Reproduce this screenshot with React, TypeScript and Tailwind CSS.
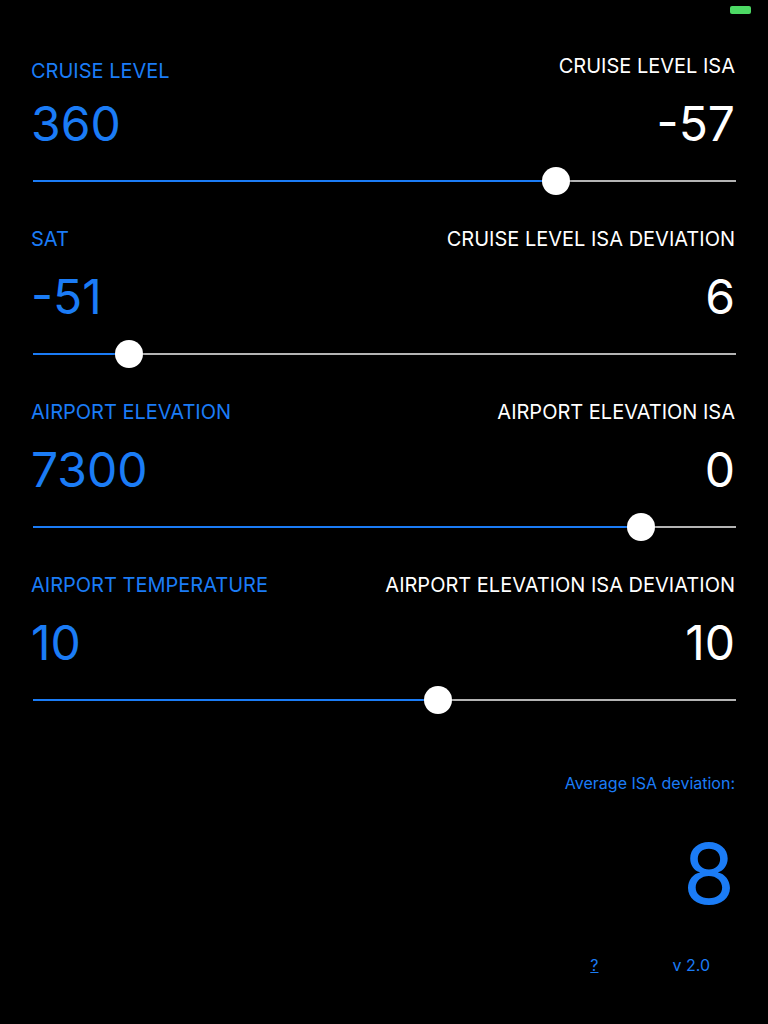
import React from 'react';

type Row = {
  label: string;
  value: string;
  isaLabel: string;
  isaValue: string;
  pos: number;
  shift?: boolean;
};

const rows: Row[] = [
  { label: 'CRUISE LEVEL', value: '360', isaLabel: 'CRUISE LEVEL ISA', isaValue: '-57', pos: 0.744, shift: true },
  { label: 'SAT', value: '-51', isaLabel: 'CRUISE LEVEL ISA DEVIATION', isaValue: '6', pos: 0.1366 },
  { label: 'AIRPORT ELEVATION', value: '7300', isaLabel: 'AIRPORT ELEVATION ISA', isaValue: '0', pos: 0.865 },
  { label: 'AIRPORT TEMPERATURE', value: '10', isaLabel: 'AIRPORT ELEVATION ISA DEVIATION', isaValue: '10', pos: 0.576 },
];

function Slider({ pos }: { pos: number }) {
  const pct = `${pos * 100}%`;
  return (
    <div className="relative h-[28px] ml-[2px] mr-[-1px] flex items-center">
      <div className="flex h-[2px] w-full">
        <div className="h-full bg-[#1b7cf6]" style={{ width: pct }} />
        <div className="h-full flex-1 bg-[#b4b4b4]" />
      </div>
      {/* thumb */}
      <div
        className="absolute top-0 w-[28px] h-[28px] -ml-[14px] rounded-full bg-white shadow-[0_1px_3px_rgba(0,0,0,0.4)]"
        style={{ left: pct }}
      />
    </div>
  );
}

function Section({ row, last }: { row: Row; last?: boolean }) {
  return (
    <div className={last ? '' : 'mb-[31px]'}>
      <div className="flex justify-between h-[24px] pt-[1px] text-[20px] leading-[24px]">
        <span className={`text-[#1b7cf6] ${row.shift ? 'pt-[5px]' : ''}`}>{row.label}</span>
        <span className="text-white">{row.isaLabel}</span>
      </div>
      <div className="mt-[23px] flex justify-between h-[48px] text-[48px] leading-[48px]">
        <span className="text-[#1b7cf6]">{row.value}</span>
        <span className="text-white">{row.isaValue}</span>
      </div>
      <div className="mt-[19px]">
        <Slider pos={row.pos} />
      </div>
    </div>
  );
}

export default function App() {
  return (
    <div className="w-[768px] h-[1024px] bg-black overflow-hidden" style={{ fontFamily: 'Inter, "Noto Sans", sans-serif' }}>
      {/* status bar */}
      <div className="h-[20px] flex justify-end pt-[6px] pr-[17px]">
        <div className="w-[21px] h-[8px] rounded-[2px] bg-[#4cd964]" />
      </div>

      <div className="pt-[33px] pl-[31px] pr-[33px]">
        {rows.map((r, i) => (
          <Section key={r.label} row={r} last={i === rows.length - 1} />
        ))}

        <div className="mt-[59px] text-right text-[16px] leading-[20px] text-[#1b7cf6]">
          Average ISA deviation:
        </div>
        <div className="mt-[39px] text-right text-[84px] leading-[84px] text-[#1b7cf6]">8</div>
      </div>

      <div className="mt-[39px] flex justify-end items-baseline gap-[74px] pr-[58px] text-[16px] leading-[20px] text-[#1b7cf6]">
        <span className="underline">?</span>
        <span>v 2.0</span>
      </div>
    </div>
  );
}
